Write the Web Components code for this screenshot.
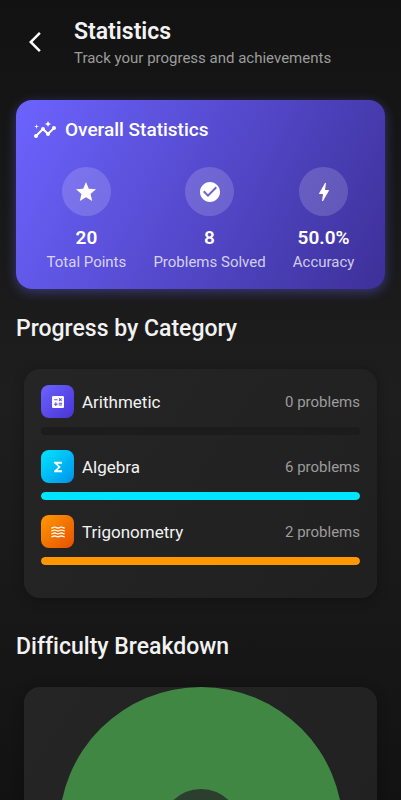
<!DOCTYPE html>
<html lang="en">
<head>
<meta charset="utf-8">
<meta name="viewport" content="width=device-width, initial-scale=1">
<title>Statistics</title>
<style>
html, body { margin: 0; height: 100%; background: #121212; }
body { font-family: Roboto, "Liberation Sans", sans-serif; font-variant-ligatures: none; color: #f2f2f2; }
</style>
</head>
<body>
<stats-page>
  <page-header slot="header" heading="Statistics" subtitle="Track your progress and achievements"></page-header>
  <overall-card heading="Overall Statistics">
    <stat-item icon="star" value="20">Total Points</stat-item>
    <stat-item icon="check" value="8">Problems Solved</stat-item>
    <stat-item icon="bolt" value="50.0%">Accuracy</stat-item>
  </overall-card>
  <page-section heading="Progress by Category">
    <category-progress icon="calculate" name="Arithmetic" solved="0" share="0" style="--from:#6c63ff;--to:#4834d4"></category-progress>
    <category-progress icon="functions" name="Algebra" solved="6" share="100" style="--from:#00e5ff;--to:#0091ea;--bar:#00e5ff"></category-progress>
    <category-progress icon="waves" name="Trigonometry" solved="2" share="100" style="--from:#ff9800;--to:#e65100;--bar:#ff9800"></category-progress>
  </page-section>
  <page-section heading="Difficulty Breakdown" flush>
    <donut-chart label="Difficulty breakdown chart"></donut-chart>
  </page-section>
</stats-page>

<script>
const WAVE = 'M17 16.99c-1.35 0-2.2.42-2.95.8-.65.33-1.18.6-2.05.6-.9 0-1.4-.25-2.05-.6-.75-.38-1.57-.8-2.95-.8s-2.2.42-2.95.8c-.65.33-1.17.6-2.05.6v1.95c1.35 0 2.2-.42 2.95-.8.65-.33 1.17-.6 2.05-.6s1.4.25 2.05.6c.75.38 1.57.8 2.95.8s2.2-.42 2.95-.8c.65-.33 1.18-.6 2.05-.6.9 0 1.4.25 2.05.6.75.38 1.58.8 2.95.8v-1.95c-.9 0-1.4-.25-2.05-.6-.75-.38-1.6-.8-2.95-.8z';
const ICONS = {
  back: '<path d="M17.77 3.77L16 2 6 12l10 10 1.77-1.77L9.54 12z"/>',
  insights: '<path d="M21 8c-1.45 0-2.26 1.44-1.93 2.51l-3.55 3.56c-.3-.09-.74-.09-1.04 0l-2.55-2.55C12.27 10.45 11.46 9 10 9c-1.45 0-2.27 1.44-1.93 2.52l-4.56 4.55C2.44 15.74 1 16.55 1 18c0 1.1.9 2 2 2 1.45 0 2.26-1.44 1.93-2.51l4.55-4.56c.3.09.74.09 1.04 0l2.55 2.55C12.73 16.55 13.54 18 15 18c1.45 0 2.27-1.44 1.93-2.52l3.56-3.55c1.07.33 2.51-.48 2.51-1.93 0-1.1-.9-2-2-2z"/><path d="M15 9l.94-2.07L18 6l-2.06-.93L15 3l-.92 2.07L12 6l2.08.93zM3.5 11L4 9l2-.5L4 8l-.5-2L3 8l-2 .5L3 9z"/>',
  star: '<path d="M12 17.27L18.18 21l-1.64-7.03L22 9.24l-7.19-.61L12 2 9.19 8.63 2 9.24l5.46 4.73L5.82 21z"/>',
  check: '<path d="M12 2C6.48 2 2 6.48 2 12s4.48 10 10 10 10-4.48 10-10S17.52 2 12 2zm-2 15l-5-5 1.41-1.41L10 14.17l7.59-7.59L19 8l-9 9z"/>',
  bolt: '<path d="M11 21h-1l1-7H7.5c-.58 0-.57-.32-.38-.66.19-.34.05-.08.07-.12C8.48 10.94 10.42 7.54 13 3h1l-1 7h3.5c.49 0 .56.33.47.51l-.07.15C12.96 17.55 11 21 11 21z"/>',
  calculate: '<path fill-rule="evenodd" d="M19 3H5c-1.100 0-2 .9-2 2v14c0 1.100.9 2 2 2h14c1.100 0 2-.9 2-2V5c0-1.100-.9-2-2-2zm-5.970 4.060l1.060-1.060 1.410 1.410 1.410-1.410 1.060 1.060-1.410 1.410 1.410 1.410-1.060 1.060-1.410-1.410-1.410 1.410-1.060-1.060 1.410-1.410zM6.250 7.720h5v1.500h-5zM11.500 16h-2v2H8v-2H6v-1.500h2v-2h1.500v2h2zm6.500 1.250h-5v-1.500h5zm0-2.500h-5v-1.500h5z"/>',
  functions: '<path d="M18 4H6v2l6.500 6L6 18v2h12v-3h-7l5-5-5-5h7z"/>',
  waves: [0, -4.45, -8.9, -13.35].map(y => `<path transform="translate(0 ${y})" d="${WAVE}"/>`).join('')
};

class BaseElement extends HTMLElement {
  connectedCallback() {
    if (!this.shadowRoot) this.attachShadow({ mode: 'open' }).innerHTML = this.render();
  }
  attr(name) { return this.getAttribute(name) || ''; }
}

customElements.define('app-icon', class extends BaseElement {
  render() {
    return `<style>
      :host { display: block; flex: none; width: 24px; height: 24px; }
      svg { display: block; width: 100%; height: 100%; fill: currentColor; }
    </style><svg viewBox="0 0 24 24" aria-hidden="true">${ICONS[this.attr('name')]}</svg>`;
  }
});

customElements.define('stats-page', class extends BaseElement {
  render() {
    return `<style>
      :host { display: block; height: 100vh; overflow: hidden auto; scrollbar-width: none;
        box-sizing: border-box; background: linear-gradient(#121212, #1e1e1e 50%, #121212); }
      main { padding: 20px 16px 16px; }
    </style><slot name="header"></slot><main><slot></slot></main>`;
  }
});

customElements.define('page-header', class extends BaseElement {
  render() {
    return `<style>
      :host { display: flex; align-items: center; gap: 15px; padding: 16px 16px 12px 11px; }
      button { flex: none; display: grid; place-items: center; width: 48px; height: 48px; padding: 0;
        border: 0; border-radius: 50%; background: none; color: #fff; cursor: pointer; }
      h1 { margin: 0; font-size: 23px; line-height: 32px; font-weight: 600; }
      p { margin: 0; font-size: 15px; line-height: 20px; color: #9c9c9c; }
    </style>
    <button type="button" aria-label="Back"><app-icon name="back"></app-icon></button>
    <div><h1>${this.attr('heading')}</h1><p>${this.attr('subtitle')}</p></div>`;
  }
});

customElements.define('overall-card', class extends BaseElement {
  render() {
    return `<style>
      :host { display: block; padding: 17px; border-radius: 16px; color: #fff;
        background: linear-gradient(117deg, #6c63ff, #3d3099);
        box-shadow: 0 3px 12px rgba(108, 99, 255, .4); }
      header { display: flex; align-items: center; gap: 8px; }
      h2 { margin: 0; font-size: 19px; line-height: 26px; font-weight: 500; }
      .stats { display: flex; justify-content: space-around; padding-top: 24px; }
    </style>
    <header><app-icon name="insights"></app-icon><h2>${this.attr('heading')}</h2></header>
    <div class="stats"><slot></slot></div>`;
  }
});

customElements.define('stat-item', class extends BaseElement {
  render() {
    return `<style>
      :host { display: flex; flex-direction: column; align-items: center; white-space: nowrap; }
      .disc { display: grid; place-items: center; width: 49px; height: 49px; border-radius: 50%;
        background: rgba(255, 255, 255, .16); }
      strong { margin-top: 8px; font-size: 19px; line-height: 28px; font-weight: 600; }
      span { font-size: 15px; line-height: 20px; color: rgba(255, 255, 255, .75); }
    </style>
    <div class="disc"><app-icon name="${this.attr('icon')}"></app-icon></div>
    <strong>${this.attr('value')}</strong><span><slot></slot></span>`;
  }
});

customElements.define('page-section', class extends BaseElement {
  render() {
    return `<style>
      :host { display: block; margin-top: 24px; }
      h2 { margin: 0; font-size: 23px; line-height: 32px; font-weight: 500; }
      .card { display: flex; flex-direction: column; gap: 15px; margin: 24px 8px 0; padding: 16px 17px 33px;
        border-radius: 16px; background: linear-gradient(123deg, #252525, #202020);
        box-shadow: 0 2px 12px rgba(0, 0, 0, .3); }
      :host([flush]) { margin-top: 33px; }
      :host([flush]) .card { padding: 0 0 16px; }
    </style><h2>${this.attr('heading')}</h2><div class="card"><slot></slot></div>`;
  }
});

customElements.define('category-progress', class extends BaseElement {
  render() {
    return `<style>
      :host { display: flex; flex-direction: column; gap: 9px; }
      .row { display: flex; align-items: center; gap: 8px; }
      .tile { display: grid; place-items: center; width: 33px; height: 33px; border-radius: 8px; color: #fff;
        background: linear-gradient(135deg, var(--from), var(--to)); }
      app-icon { width: 16px; height: 16px; }
      .name { flex: 1; font-size: 17px; line-height: 24px; }
      .count { font-size: 15px; line-height: 20px; color: #9c9c9c; }
      .track { height: 8px; border-radius: 4px; overflow: hidden; background: #1c1c1c; }
      .fill { height: 100%; width: ${this.attr('share')}%; border-radius: 4px; background: var(--bar); }
    </style>
    <div class="row"><div class="tile"><app-icon name="${this.attr('icon')}"></app-icon></div>
      <span class="name" id="name">${this.attr('name')}</span>
      <span class="count">${this.attr('solved')} problems</span></div>
    <div class="track" role="progressbar" aria-labelledby="name" aria-valuenow="${this.attr('share')}"><div class="fill"></div></div>`;
  }
});

customElements.define('donut-chart', class extends BaseElement {
  render() {
    return `<style>
      :host { display: block; }
      svg { display: block; width: 284px; max-width: 100%; margin: 0 auto; }
    </style>
    <svg viewBox="0 0 284 284" role="img" aria-label="${this.attr('label')}">
      <circle cx="142" cy="142" r="142" fill="#408743"/>
      <circle cx="142" cy="142" r="40" fill="#2c3e2d"/>
    </svg>`;
  }
});
</script>
</body>
</html>
